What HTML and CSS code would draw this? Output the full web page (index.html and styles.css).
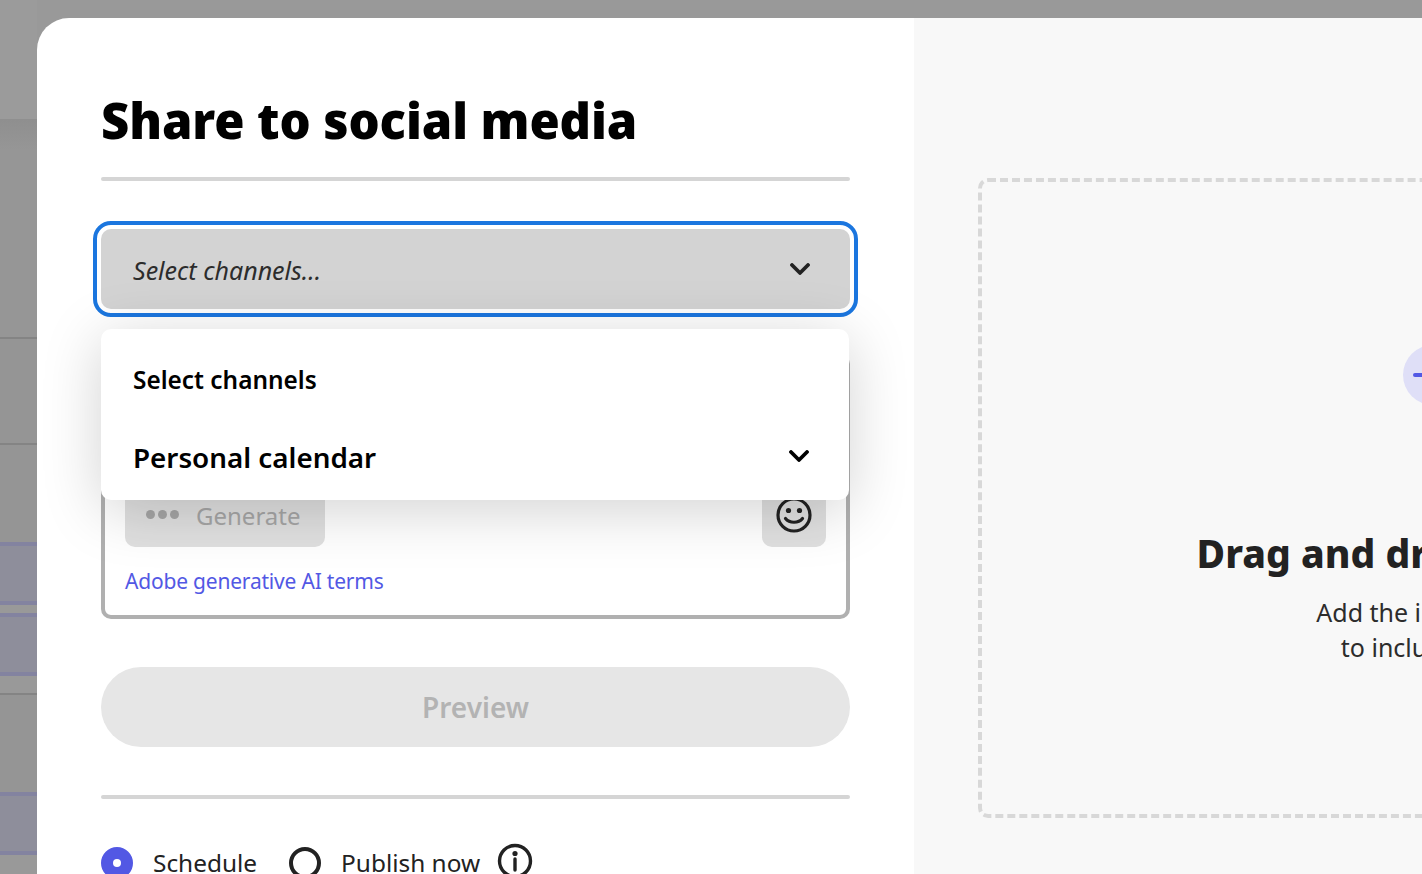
FILE: index.html
```html
<!DOCTYPE html>
<html lang="en">
  <head>
    <meta charset="UTF-8" />
    <meta name="viewport" content="width=device-width, initial-scale=1.0" />
    <title>Share to social media</title>
    <link rel="stylesheet" href="styles.css">
  </head>
  <body>
    <div class="backdrop">
      <div class="row row-head"></div>
      <div class="row row-a"></div>
      <div class="row row-b"></div>
      <div class="row row-c"></div>
      <div class="row row-post"></div>
      <div class="row row-post row-post-2"></div>
      <div class="row row-d"></div>
      <div class="row row-post"></div>
      <div class="row"></div>
    </div>

    <div class="modal">
      <div class="form-panel">
        <h1>Share to social media</h1>
        <hr class="rule" />

        <div class="channel-field">
          <button class="channel-select">
            <span>Select channels...</span>
            <svg class="chevron" viewBox="0 0 20 12"><path d="M2 2l8 8 8-8" /></svg>
          </button>

          <div class="channel-menu">
            <div class="menu-title">Select channels</div>
            <div class="menu-group">
              <span>Personal calendar</span>
              <svg class="chevron chevron-dark" viewBox="0 0 20 12"><path d="M2 2l8 8 8-8" /></svg>
            </div>
          </div>
        </div>

        <div class="caption-box">
          <div class="caption-tools">
            <button class="generate-btn">
              <span class="dots"><i></i><i></i><i></i></span>
              Generate
            </button>
            <button class="emoji-btn">
              <svg viewBox="0 0 36 36" class="smiley">
                <circle cx="18" cy="18" r="16" />
                <circle class="eye" cx="12.5" cy="13.5" r="2.6" />
                <circle class="eye" cx="23.5" cy="13.5" r="2.6" />
                <path d="M9.5 21.5c4 5 13 5 17 0" />
              </svg>
            </button>
          </div>
          <a href="#" class="terms">Adobe generative AI terms</a>
        </div>

        <button class="preview-btn">Preview</button>
        <hr class="rule rule-low" />

        <div class="publish-row">
          <span class="radio radio-on"></span>
          <span class="radio-label">Schedule</span>
          <span class="radio radio-off"></span>
          <span class="radio-label">Publish now</span>
          <svg viewBox="0 0 36 36" class="info">
            <circle cx="18" cy="18" r="15.5" />
            <circle class="eye" cx="18" cy="10.5" r="2.6" />
            <path d="M18 16v11" />
          </svg>
        </div>
      </div>

      <div class="preview-panel">
        <div class="dropzone">
          <div class="add-circle"><span></span></div>
          <h2>Drag and drop an image</h2>
          <p>Add the images you<br />to include them</p>
        </div>
      </div>
    </div>
  </body>
</html>
```

FILE: styles.css
```css
body {
  margin: 0;
  height: 874px;
  overflow: hidden;
  background-color: #999;
  font-family: "Noto Sans", Arial, sans-serif;
  color: #000;
}
button {
  border: none;
  font-family: inherit;
}

/* page behind the dialog, only the left strip shows */
.backdrop {
  display: flex;
  flex-direction: column;
  width: 37px;
  height: 874px;
}
.row {
  flex: none;
  box-sizing: border-box;
  background: #959595;
}
.row-head {
  height: 120px;
  background: #9b9b9b;
  border-bottom: 1px solid #8f8f8f;
}
.row-a {
  height: 219px;
  border-bottom: 2px solid #848484;
  background: linear-gradient(#8f8f8f, #969696 30px);
}
.row-b {
  height: 106px;
  border-bottom: 2px solid #848484;
}
.row-c {
  height: 97px;
}
.row-post {
  height: 63px;
  background: #8e8e9b;
  border-top: 4px solid #8383a0;
  border-bottom: 4px solid #8383a0;
}
.row-post-2 {
  margin-top: 8px;
}
.row-d {
  height: 99px;
  margin-top: 17px;
  border-top: 2px solid #848484;
}

.modal {
  position: absolute;
  left: 37px;
  top: 18px;
  right: 0;
  bottom: 0;
  display: flex;
  overflow: hidden;
  background: #fff;
  border-top-left-radius: 32px;
}
.form-panel {
  flex: none;
  box-sizing: border-box;
  width: 877px;
  padding: 0 64px;
}
h1 {
  margin: 0;
  padding-top: 70px;
  height: 89px;
  font-size: 49px;
  font-weight: 900;
  line-height: 64px;
  letter-spacing: -0.1px;
  white-space: nowrap;
}
.rule {
  margin: 0;
  height: 4px;
  border: none;
  border-radius: 2px;
  background: #d5d5d5;
}
.rule-low {
  margin-top: 48px;
}

.channel-field {
  position: relative;
  margin-top: 48px;
}
.channel-select {
  display: flex;
  align-items: center;
  justify-content: space-between;
  box-sizing: border-box;
  width: 100%;
  height: 80px;
  padding: 2px 40px 0 32px;
  background: #d3d3d3;
  border-radius: 10px;
  outline: 4px solid #1b76df;
  outline-offset: 4px;
  font-size: 25px;
  font-style: italic;
  color: #2c2c2c;
}
.chevron {
  width: 20px;
  height: 12px;
  margin-top: -2px;
  fill: none;
  stroke: #222;
  stroke-width: 3.8;
  stroke-linecap: round;
  stroke-linejoin: round;
}
.chevron-dark {
  margin-top: -3px;
  stroke: #000;
}
.channel-menu {
  position: absolute;
  z-index: 2;
  top: 100px;
  left: 0;
  right: 1px;
  height: 171px;
  box-sizing: border-box;
  padding: 33px 40px 0 32px;
  background: #fff;
  border-radius: 10px;
  box-shadow: 0 10px 60px rgba(0, 0, 0, 0.18);
}
.menu-title {
  font-size: 24.4px;
  font-weight: 600;
  line-height: 36px;
}
.menu-group {
  display: flex;
  align-items: center;
  justify-content: space-between;
  margin-top: 41px;
  font-size: 27.8px;
  font-weight: 600;
  line-height: 36px;
}

.caption-box {
  box-sizing: border-box;
  height: 265px;
  margin-top: 45px;
  padding: 0 20px;
  border: 4px solid #b0b0b0;
  border-radius: 10px;
}
.caption-tools {
  display: flex;
  justify-content: space-between;
  margin-top: 109px;
}
.generate-btn {
  display: flex;
  align-items: center;
  gap: 17px;
  box-sizing: border-box;
  width: 200px;
  height: 80px;
  padding: 16px 0 0 21px;
  background: #e0e0e0;
  border-radius: 10px;
  font-size: 24px;
  color: #a6a6a6;
}
.dots {
  display: flex;
  gap: 3px;
  margin-top: -2px;
}
.dots i {
  width: 9px;
  height: 9px;
  border-radius: 50%;
  background: #a6a6a6;
}
.emoji-btn {
  display: flex;
  justify-content: center;
  box-sizing: border-box;
  width: 64px;
  height: 80px;
  padding: 30px 0 0;
  background: #e0e0e0;
  border-radius: 10px;
}
.smiley {
  width: 36px;
  height: 36px;
  fill: none;
  stroke: #222;
  stroke-width: 3.2;
  stroke-linecap: round;
}
.eye {
  fill: #222;
  stroke: none;
}
.terms {
  display: block;
  margin-top: 18px;
  font-size: 21px;
  line-height: 32px;
  letter-spacing: -0.2px;
  color: #5258e4;
  text-decoration: none;
}

.preview-btn {
  display: block;
  width: 100%;
  height: 80px;
  margin-top: 48px;
  background: #e6e6e6;
  border-radius: 40px;
  font-size: 28px;
  font-weight: 600;
  color: #b3b3b3;
}

.publish-row {
  display: flex;
  align-items: center;
  margin-top: 45px;
  height: 36px;
}
.radio {
  flex: none;
  box-sizing: border-box;
  width: 32px;
  height: 32px;
  margin-top: 2px;
  border-radius: 50%;
}
.radio-on {
  background: #5258e4;
  border: 12px solid #5258e4;
}
.radio-on::after {
  content: "";
  display: block;
  width: 8px;
  height: 8px;
  border-radius: 50%;
  background: #fff;
}
.radio-off {
  margin-left: 32px;
  border: 4px solid #222;
}
.radio-label {
  margin-left: 20px;
  font-size: 24.4px;
  color: #222;
}
.info {
  flex: none;
  width: 36px;
  height: 36px;
  margin: -2px 0 0 17px;
  fill: none;
  stroke: #222;
  stroke-width: 3.4;
  stroke-linecap: round;
}

.preview-panel {
  flex: none;
  box-sizing: border-box;
  width: 1100px;
  padding: 160px 0 0 64px;
  background: #f8f8f8;
}
.dropzone {
  box-sizing: border-box;
  width: 910px;
  height: 640px;
  padding-top: 163px;
  border: 4px dashed #d8d8d8;
  border-radius: 10px;
  text-align: center;
}
.add-circle {
  position: relative;
  width: 60px;
  height: 60px;
  margin: 0 auto;
  border-radius: 50%;
  background: #dfdff7;
}
.add-circle span {
  position: absolute;
  left: 10px;
  top: 28px;
  width: 40px;
  height: 4px;
  border-radius: 2px;
  background: #5258e4;
}
h2 {
  margin: 122px 0 0;
  font-size: 39px;
  font-weight: 800;
  line-height: 52px;
  color: #222;
  white-space: nowrap;
}
.dropzone p {
  margin: 16px 0 0;
  font-size: 25px;
  line-height: 35px;
  color: #2c2c2c;
}
```
